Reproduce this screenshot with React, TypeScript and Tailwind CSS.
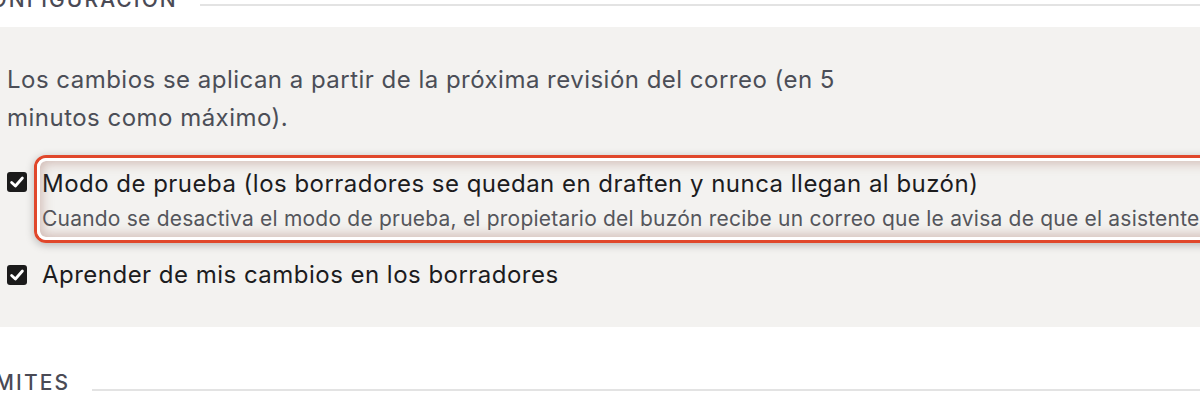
import React from "react";

function Check() {
  return (
    <span className="flex h-[20px] w-[20px] shrink-0 items-center justify-center rounded-[3px] bg-[#1b1b1b]">
      <svg width="20" height="20" viewBox="0 0 20 20" fill="none">
        <path d="M4.6 10.4 L8.4 14 L15.4 6" stroke="#ffffff" strokeWidth="2.8" strokeLinecap="round" strokeLinejoin="round" />
      </svg>
    </span>
  );
}

export default function App() {
  return (
    <div className="h-[400px] w-[1200px] overflow-hidden bg-white" style={{ fontFamily: "Inter, 'Noto Sans', sans-serif" }}>
      <div className="-ml-[27px] w-[1260px]">
        <div className="-mt-[12px] flex h-[24px] items-start gap-[22px]">
          <span className="text-[21px] leading-[24px] font-medium tracking-[0.1em] text-[#4a4a55]">CONFIGURACIÓN</span>
          <span className="mt-[16px] h-[2px] flex-1 bg-[#e3e3e3]" />
        </div>
        <div className="mt-[15px] h-[300px] bg-[#f3f2f0] pl-[34px] pt-[34px]">
          <p className="max-w-[890px] text-[24px] leading-[38px] tracking-[0.02em] text-[#4b4e57]">
            Los cambios se aplican a partir de la próxima revisión del correo (en 5 minutos como máximo).
          </p>
          <div className="mt-[31px] flex items-start gap-[15px]">
            <div className="mt-[4px]">
              <Check />
            </div>
            <div className="relative min-w-0 flex-1">
              <div className="pointer-events-none absolute -top-[13px] -bottom-[9px] -left-[8px] -right-[40px] rounded-[12px] border-[3px] border-[#e0472b] shadow-[0_2px_9px_rgba(0,0,0,0.25)]">
                <div className="h-full w-full rounded-[9px] border-[3px] border-white shadow-[inset_0_0_12px_2px_rgba(150,90,75,0.38)]" />
              </div>
              <div className="whitespace-nowrap text-[24px] leading-[32px] tracking-[0.02em] text-[#1c1c1e]">
                Modo de prueba (los borradores se quedan en draften y nunca llegan al buzón)
              </div>
              <div className="mt-[4px] whitespace-nowrap text-[21px] leading-[30px] tracking-[0.01em] text-[#55565c]">
                Cuando se desactiva el modo de prueba, el propietario del buzón recibe un correo que le avisa de que el asistente está activo.
              </div>
            </div>
          </div>
          <div className="mt-[25px] flex items-start gap-[15px]">
            <div className="mt-[6px]">
              <Check />
            </div>
            <div className="whitespace-nowrap text-[24px] leading-[32px] tracking-[0.02em] text-[#1c1c1e]">Aprender de mis cambios en los borradores</div>
          </div>
        </div>
        <div className="mt-[44px] flex h-[24px] items-start gap-[22px]">
          <span className="text-[21px] leading-[24px] font-medium tracking-[0.1em] text-[#4a4a55]">LÍMITES</span>
          <span className="mt-[18px] h-[2px] flex-1 bg-[#e3e3e3]" />
        </div>
      </div>
    </div>
  );
}
